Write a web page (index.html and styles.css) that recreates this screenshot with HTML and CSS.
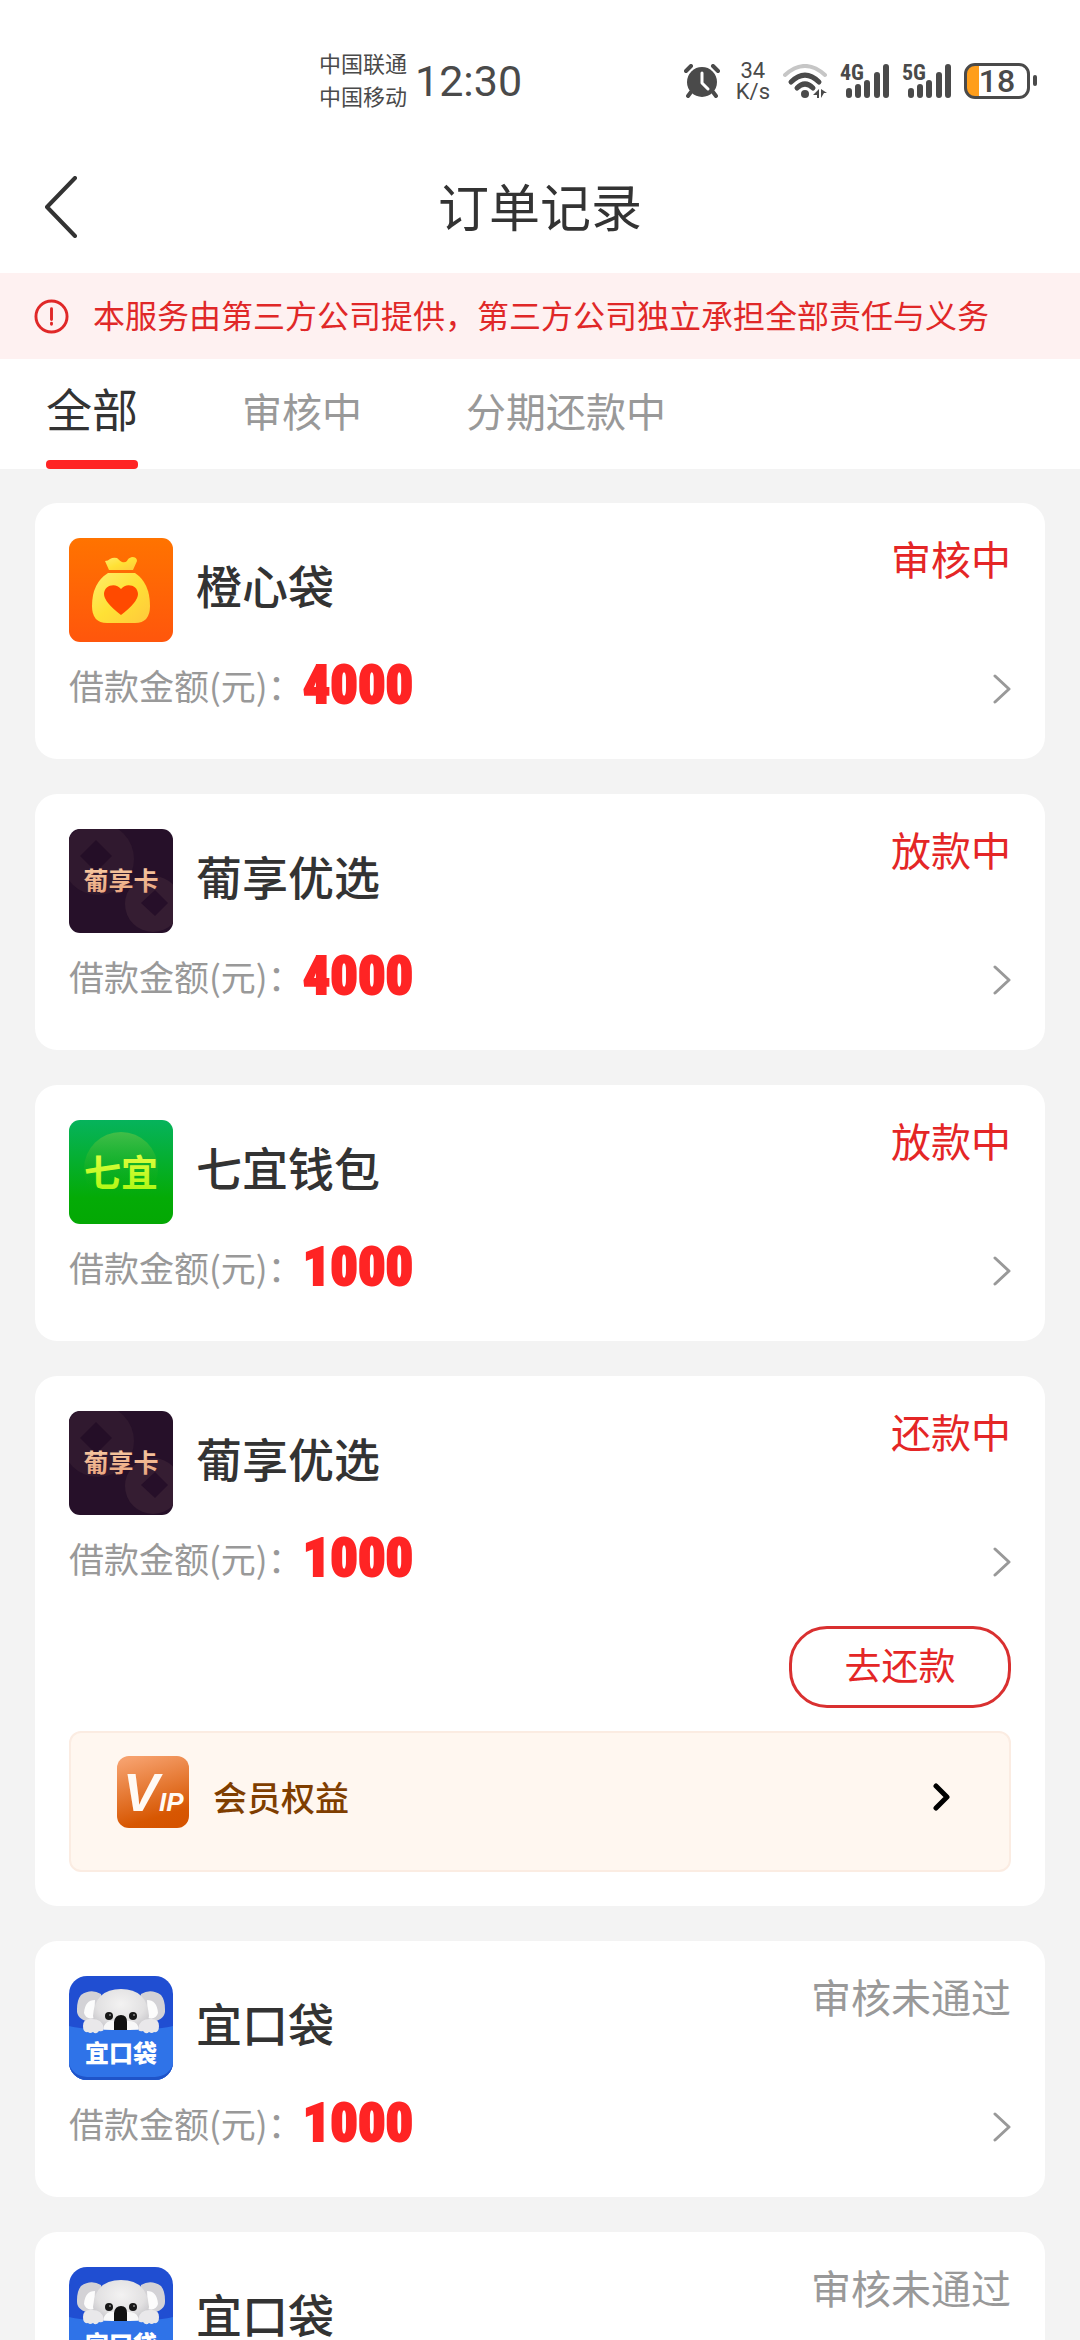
FILE: index.html
```html
<!DOCTYPE html>
<html lang="zh-CN">
<head>
  <meta charset="UTF-8" />
  <meta name="viewport" content="width=device-width, initial-scale=1.0" />
  <title>订单记录</title>
  <link rel="stylesheet" href="styles.css">
</head>
<body>

<!-- Shared icons -->
<svg class="sprite" aria-hidden="true">
  <defs>
    <linearGradient id="g-orange" x1="0" y1="0" x2="0" y2="1">
      <stop offset="0" stop-color="#ff7300" /><stop offset="1" stop-color="#ff560c" />
    </linearGradient>
    <linearGradient id="g-gold" x1="0" y1="0" x2="1" y2="1">
      <stop offset="0" stop-color="#ffec6b" /><stop offset="0.5" stop-color="#ffe135" /><stop offset="1" stop-color="#ffc83c" />
    </linearGradient>
    <linearGradient id="g-green" x1="0" y1="0" x2="0" y2="1">
      <stop offset="0" stop-color="#06b35c" /><stop offset="0.75" stop-color="#04ab06" /><stop offset="1" stop-color="#04a804" />
    </linearGradient>
    <linearGradient id="g-disc" x1="0" y1="0" x2="0" y2="1">
      <stop offset="0" stop-color="#42be48" /><stop offset="0.8" stop-color="#0cac0c" stop-opacity="0" />
    </linearGradient>
    <linearGradient id="g-lime" x1="0" y1="0" x2="0" y2="1">
      <stop offset="0" stop-color="#ecff4a" /><stop offset="1" stop-color="#a6f70c" />
    </linearGradient>
    <linearGradient id="g-copper" x1="0" y1="0" x2="0" y2="1">
      <stop offset="0" stop-color="#f9cfa8" /><stop offset="1" stop-color="#e9a27c" />
    </linearGradient>
    <linearGradient id="g-vip" x1="0.3" y1="0" x2="0.6" y2="1">
      <stop offset="0" stop-color="#f6a06c" /><stop offset="0.85" stop-color="#d75702" /><stop offset="1" stop-color="#d65400" />
    </linearGradient>
    <radialGradient id="g-fur" cx="0.5" cy="0.35" r="0.65">
      <stop offset="0" stop-color="#f3f2f2" /><stop offset="0.65" stop-color="#e2e1e2" /><stop offset="1" stop-color="#c6c5c9" />
    </radialGradient>

    <symbol id="logo-bag" viewBox="0 0 104 104">
      <rect width="104" height="104" rx="11" fill="url(#g-orange)" />
      <path d="M40 32 36 23q3 0 5-2 3-2 7-1 3 3 5 4 3 1 5-1 1-3 5-4 5 0 5 4l-4 9z" fill="url(#g-gold)" />
      <path d="M39 35h27q15 10 15 33 0 17-15 17H38q-15 0-15-17 0-23 16-33z" fill="url(#g-gold)" />
      <path d="M52 77Q35 64 35 56c0-9 12-12 17-5 5-7 17-4 17 5q0 8-17 21z" fill="#ff4a00" />
    </symbol>

    <symbol id="logo-puxiang" viewBox="0 0 104 104">
      <clipPath id="c-pu"><rect width="104" height="104" rx="11" /></clipPath>
      <g clip-path="url(#c-pu)">
        <rect width="104" height="104" fill="#261029" />
        <circle cx="29" cy="30" r="36" fill="#30192f" />
        <path d="M27 11 43 27 27 43 11 27z" fill="#240e27" />
        <circle cx="84" cy="75" r="28" fill="#351d32" />
        <path d="M86 61 99 74 86 87 72 74z" fill="#260f29" />
      </g>
      <text class="logo-text logo-text-pu" x="52" y="61" fill="url(#g-copper)">葡享卡</text>
    </symbol>

    <symbol id="logo-qiyi" viewBox="0 0 104 104">
      <rect width="104" height="104" rx="11" fill="url(#g-green)" />
      <circle cx="52" cy="49" r="37" fill="url(#g-disc)" />
      <text class="logo-text logo-text-qi" x="52" y="67" fill="url(#g-lime)">七宜</text>
    </symbol>

    <symbol id="logo-koala" viewBox="0 0 104 104">
      <clipPath id="c-ko"><rect width="104" height="104" rx="18" /></clipPath>
      <g clip-path="url(#c-ko)">
        <rect width="104" height="104" fill="#204ed2" />
        <path d="M12 19q10-7 20-1l4 26-14 2Q7 44 8 33q0-9 4-14zM92 19q-10-7-20-1l-4 26 14 2q15-2 14-13 0-9-4-14z" fill="#d3d2d6" />
        <path d="M15 37q1-13 11-13l-1 18q-8 2-10-5zM89 37q-1-13-11-13l1 18q8 2 10-5z" fill="#fcfcfc" />
        <path d="M24 40q2-27 28-27t28 27q-2 16-28 16T24 40z" fill="url(#g-fur)" />
        <path d="M35 50q3-6 11-5h13q8 0 10 5v6H35z" fill="#f8f8f8" />
        <circle cx="40" cy="40" r="4" fill="#171717" /><circle cx="64" cy="40" r="4" fill="#171717" />
        <circle cx="41" cy="39" r="1" fill="#888" /><circle cx="65" cy="39" r="1" fill="#888" />
        <path d="M45 56V46q1-7 7-7t6 7v10z" fill="#101010" />
        <path d="M0 50q16 4 52 4t52-4v54H0z" fill="#2f73e8" />
        <path d="M14 50q0-7 7-7 12-1 14 9 0 4-5 3-3 4-6 1-3 2-5 0-5 1-5-6zM90 50q0-7-7-7-12-1-14 9 0 4 5 3 3 4 6 1 3 2 5 0 5 1 5-6z" fill="#e9e8ea" />
        <path d="M0 88q4 12 18 13h68q14-1 18-13v16H0z" fill="#1f54c9" />
      </g>
      <text class="logo-text logo-text-ko" x="52" y="86" fill="#fff">宜口袋</text>
    </symbol>

    <symbol id="arrow" viewBox="0 0 18 30">
      <path d="M2 2 16 15 2 28" fill="none" stroke="currentColor" stroke-width="3" stroke-linecap="round" stroke-linejoin="round" />
    </symbol>

    <symbol id="bars" viewBox="0 0 44 34">
      <path d="M3 27v4M12 23v8M21 19v12M31 11v20M40 3v28" fill="none" stroke="currentColor" stroke-width="6" stroke-linecap="round" />
    </symbol>
  </defs>
</svg>

<div class="app">
  <!-- Status bar -->
  <div class="status-bar">
    <div class="carriers"><span>中国联通</span><span>中国移动</span></div>
    <time class="clock">12:30</time>
    <div class="status-icons">
      <svg class="icon-alarm" viewBox="0 0 36 34" aria-hidden="true">
        <path d="M2 7 7 2M34 7 29 2M7 28l-3 4M29 28l3 4" stroke="currentColor" stroke-width="4" stroke-linecap="round" />
        <circle cx="18" cy="18" r="15" fill="currentColor" />
        <path d="M18 9v10l6 6" fill="none" stroke="#fff" stroke-width="3" stroke-linecap="round" stroke-linejoin="round" />
      </svg>
      <div class="speed"><span>34</span><span>K/s</span></div>
      <svg class="icon-wifi" viewBox="0 0 44 34" aria-hidden="true">
        <path d="M2 11Q22-7 42 11" fill="none" stroke="#c6c6c6" stroke-width="4" stroke-linecap="round" />
        <path d="M8 18q14-14 28 0M14 24q8-8 16 0" fill="none" stroke="currentColor" stroke-width="5" stroke-linecap="round" />
        <circle cx="22" cy="30" r="4" fill="currentColor" />
        <path d="M30 31l6-6v9h-2v-3zM38 25l6 4h-3l-3 5z" fill="currentColor" />
      </svg>
      <div class="signal"><span class="network">4G</span><svg viewBox="0 0 44 34" aria-hidden="true"><use href="#bars" /></svg></div>
      <div class="signal"><span class="network">5G</span><svg viewBox="0 0 44 34" aria-hidden="true"><use href="#bars" /></svg></div>
      <div class="battery"><span>18</span></div>
    </div>
  </div>

  <!-- Title -->
  <header class="nav-bar">
    <button class="back" type="button" aria-label="返回">
      <svg viewBox="0 0 34 62" aria-hidden="true"><path d="M31 2 3 31 31 60" fill="none" stroke="currentColor" stroke-width="4" stroke-linecap="round" stroke-linejoin="round" /></svg>
    </button>
    <h1>订单记录</h1>
  </header>

  <div class="notice">
    <svg viewBox="0 0 36 36" aria-hidden="true">
      <circle cx="18" cy="18" r="16" fill="none" stroke="currentColor" stroke-width="3" />
      <path d="M18 10v11M18 25v1" stroke="currentColor" stroke-width="3" stroke-linecap="round" />
    </svg>
    <p>本服务由第三方公司提供，第三方公司独立承担全部责任与义务</p>
  </div>

  <nav class="tabs">
    <button class="tab active" type="button">全部</button>
    <button class="tab" type="button">审核中</button>
    <button class="tab" type="button">分期还款中</button>
  </nav>

  <!-- Orders -->
  <main class="orders">
    <article class="card">
      <div class="card-head">
        <svg class="logo" aria-hidden="true"><use href="#logo-bag" /></svg>
        <h2>橙心袋</h2>
        <span class="state">审核中</span>
      </div>
      <a class="amount-row" href="#">
        <span class="label">借款金额(元)：</span><strong>4000</strong>
        <svg class="arrow" aria-hidden="true"><use href="#arrow" /></svg>
      </a>
    </article>

    <article class="card">
      <div class="card-head">
        <svg class="logo" aria-hidden="true"><use href="#logo-puxiang" /></svg>
        <h2>葡享优选</h2>
        <span class="state">放款中</span>
      </div>
      <a class="amount-row" href="#">
        <span class="label">借款金额(元)：</span><strong>4000</strong>
        <svg class="arrow" aria-hidden="true"><use href="#arrow" /></svg>
      </a>
    </article>

    <article class="card">
      <div class="card-head">
        <svg class="logo" aria-hidden="true"><use href="#logo-qiyi" /></svg>
        <h2>七宜钱包</h2>
        <span class="state">放款中</span>
      </div>
      <a class="amount-row" href="#">
        <span class="label">借款金额(元)：</span><strong>1000</strong>
        <svg class="arrow" aria-hidden="true"><use href="#arrow" /></svg>
      </a>
    </article>

    <article class="card">
      <div class="card-head">
        <svg class="logo" aria-hidden="true"><use href="#logo-puxiang" /></svg>
        <h2>葡享优选</h2>
        <span class="state">还款中</span>
      </div>
      <a class="amount-row" href="#">
        <span class="label">借款金额(元)：</span><strong>1000</strong>
        <svg class="arrow" aria-hidden="true"><use href="#arrow" /></svg>
      </a>
      <button class="repay" type="button">去还款</button>
      <a class="vip" href="#">
        <svg class="vip-logo" viewBox="0 0 72 72" aria-hidden="true">
          <rect width="72" height="72" rx="12" fill="url(#g-vip)" />
          <text class="vip-text" x="6" y="55">V<tspan class="vip-small">IP</tspan></text>
        </svg>
        <span>会员权益</span>
        <svg class="vip-arrow" viewBox="0 0 18 28" aria-hidden="true"><path d="M3 3 14 14 3 25" fill="none" stroke="currentColor" stroke-width="5" stroke-linecap="round" stroke-linejoin="round" /></svg>
      </a>
    </article>

    <article class="card">
      <div class="card-head">
        <svg class="logo" aria-hidden="true"><use href="#logo-koala" /></svg>
        <h2>宜口袋</h2>
        <span class="state rejected">审核未通过</span>
      </div>
      <a class="amount-row" href="#">
        <span class="label">借款金额(元)：</span><strong>1000</strong>
        <svg class="arrow" aria-hidden="true"><use href="#arrow" /></svg>
      </a>
    </article>

    <article class="card">
      <div class="card-head">
        <svg class="logo" aria-hidden="true"><use href="#logo-koala" /></svg>
        <h2>宜口袋</h2>
        <span class="state rejected">审核未通过</span>
      </div>
      <a class="amount-row" href="#">
        <span class="label">借款金额(元)：</span><strong>1000</strong>
        <svg class="arrow" aria-hidden="true"><use href="#arrow" /></svg>
      </a>
    </article>
  </main>
</div>

</body>
</html>
```
FILE: styles.css
```css
* { margin: 0; padding: 0; box-sizing: border-box; }

body {
  font-family: "Noto Sans CJK SC", sans-serif;
  color: #333;
  background: #f3f3f3;
}

button {
  font-family: inherit;
  background: none;
  border: none;
  cursor: pointer;
}

a { color: inherit; text-decoration: none; }

svg { display: block; flex-shrink: 0; }

.sprite { position: absolute; width: 0; height: 0; }

.app {
  display: flex;
  flex-direction: column;
  height: 100vh;
}

/* status bar */
.status-bar {
  display: flex;
  align-items: center;
  height: 144px;
  padding: 18px 43px 0 319px;
  background: #fff;
  color: #4a4a4a;
}

.carriers {
  display: flex;
  flex-direction: column;
  padding-bottom: 4px;
  font-size: 22px;
  line-height: 33px;
}

.clock {
  margin-left: 8px;
  font-family: Roboto, sans-serif;
  font-size: 43px;
}

.status-icons {
  display: flex;
  align-items: center;
  gap: 13px;
  margin-left: auto;
}

.icon-alarm { width: 36px; height: 34px; }
.icon-wifi { width: 44px; height: 34px; }

.speed {
  display: flex;
  flex-direction: column;
  align-items: center;
  margin-left: 3px;
  font-family: Roboto, sans-serif;
  font-size: 22px;
  line-height: 21px;
}

.signal { position: relative; width: 49px; }
.signal svg { width: 44px; height: 34px; margin-left: 6px; }

.network {
  position: absolute;
  left: 0;
  top: 0;
  font-family: "Roboto Condensed", Roboto, sans-serif;
  font-size: 22px;
  font-weight: bold;
  line-height: 18px;
}

.battery {
  position: relative;
  width: 66px;
  height: 36px;
  margin-right: 7px;
  border: 3px solid #4a4a4a;
  border-radius: 11px;
  background: linear-gradient(to right, #ff9e1b 12px, #fff 12px);
  font-family: Roboto, sans-serif;
  font-size: 32px;
  font-weight: 500;
  line-height: 30px;
  text-align: center;
}

.battery::after {
  content: "";
  position: absolute;
  right: -10px;
  top: 9px;
  width: 4px;
  height: 11px;
  border-radius: 2px;
  background: #4a4a4a;
}

/* title */
.nav-bar {
  display: grid;
  grid-template-columns: 1fr auto 1fr;
  align-items: center;
  height: 129px;
  padding: 0 44px 4px;
  background: #fff;
}

.back {
  width: 34px;
  color: #333;
}

.back svg { width: 34px; height: 62px; }

.nav-bar h1 {
  padding-bottom: 4px;
  font-size: 51px;
  font-weight: normal;
  line-height: 64px;
}

/* notice */
.notice {
  display: flex;
  align-items: center;
  gap: 24px;
  height: 86px;
  padding: 0 34px;
  background: #fef1f1;
  color: #e02828;
}

.notice svg { width: 35px; height: 35px; }

.notice p {
  padding-bottom: 5px;
  font-size: 32px;
  line-height: 44px;
  white-space: nowrap;
}

/* tabs */
.tabs {
  display: flex;
  gap: 104px;
  height: 110px;
  padding: 0 46px;
  background: #fff;
}

.tab {
  padding-bottom: 8px;
  font-size: 40px;
  color: #999;
}

.tab.active {
  position: relative;
  padding-bottom: 14px;
  font-size: 46px;
  color: #333;
}

.tab.active::after {
  content: "";
  position: absolute;
  left: 0;
  right: 0;
  bottom: 0;
  height: 9px;
  border-radius: 4px;
  background: #ff2424;
}

/* orders */
.orders {
  flex: 1;
  min-height: 0;
  display: flex;
  flex-direction: column;
  gap: 35px;
  padding: 34px 35px;
  overflow: hidden auto;
  scrollbar-width: none;
}

.card {
  display: flex;
  flex-direction: column;
  flex-shrink: 0;
  padding: 35px 34px 30px;
  border-radius: 22px;
  background: #fff;
}

.card-head {
  display: flex;
  align-items: center;
  gap: 23px;
}

.logo { width: 104px; height: 104px; }

.card-head h2 {
  padding-bottom: 12px;
  font-size: 46px;
  font-weight: 500;
  line-height: 60px;
}

.state {
  align-self: flex-start;
  margin-left: auto;
  font-size: 40px;
  line-height: 40px;
  color: #e42626;
}

.state.rejected { color: #999; }

.amount-row {
  display: flex;
  align-items: center;
  height: 87px;
}

.label {
  padding-bottom: 2px;
  font-size: 35px;
  line-height: 48px;
  color: #999;
}

.amount-row strong {
  padding-bottom: 2px;
  font-family: "Roboto Condensed", Roboto, sans-serif;
  font-size: 54px;
  font-weight: 900;
  line-height: 60px;
  color: #ff2424;
  -webkit-text-stroke: 2px #ff2424;
}

.arrow {
  width: 18px;
  height: 30px;
  margin-left: auto;
  margin-top: 6px;
  color: #999;
}

.repay {
  align-self: flex-end;
  width: 222px;
  height: 82px;
  margin-top: 24px;
  padding-bottom: 6px;
  border: 3px solid #d93030;
  border-radius: 38px;
  font-size: 37px;
  color: #e42626;
}

.vip {
  display: flex;
  align-items: center;
  gap: 24px;
  height: 141px;
  margin: 23px 0 4px;
  padding: 0 58px 10px 46px;
  border: 2px solid #fbece2;
  border-radius: 12px;
  background: #fff7f0;
  font-size: 34px;
  font-weight: 500;
  color: #7f3e00;
}

.vip-logo {
  width: 72px;
  height: 72px;
  margin-bottom: 10px;
}

.vip-arrow {
  width: 18px;
  height: 28px;
  margin-left: auto;
  color: #000;
}

/* text inside the logos */
.logo-text { font-weight: bold; text-anchor: middle; }
.logo-text-pu { font-size: 25px; }
.logo-text-qi { font-size: 37px; }
.logo-text-ko { font-size: 24px; font-weight: 900; }

.vip-text {
  font-family: "Liberation Sans", sans-serif;
  font-size: 54px;
  font-weight: bold;
  font-style: italic;
  fill: #fffaf4;
}

.vip-small { font-size: 26px; }
```
